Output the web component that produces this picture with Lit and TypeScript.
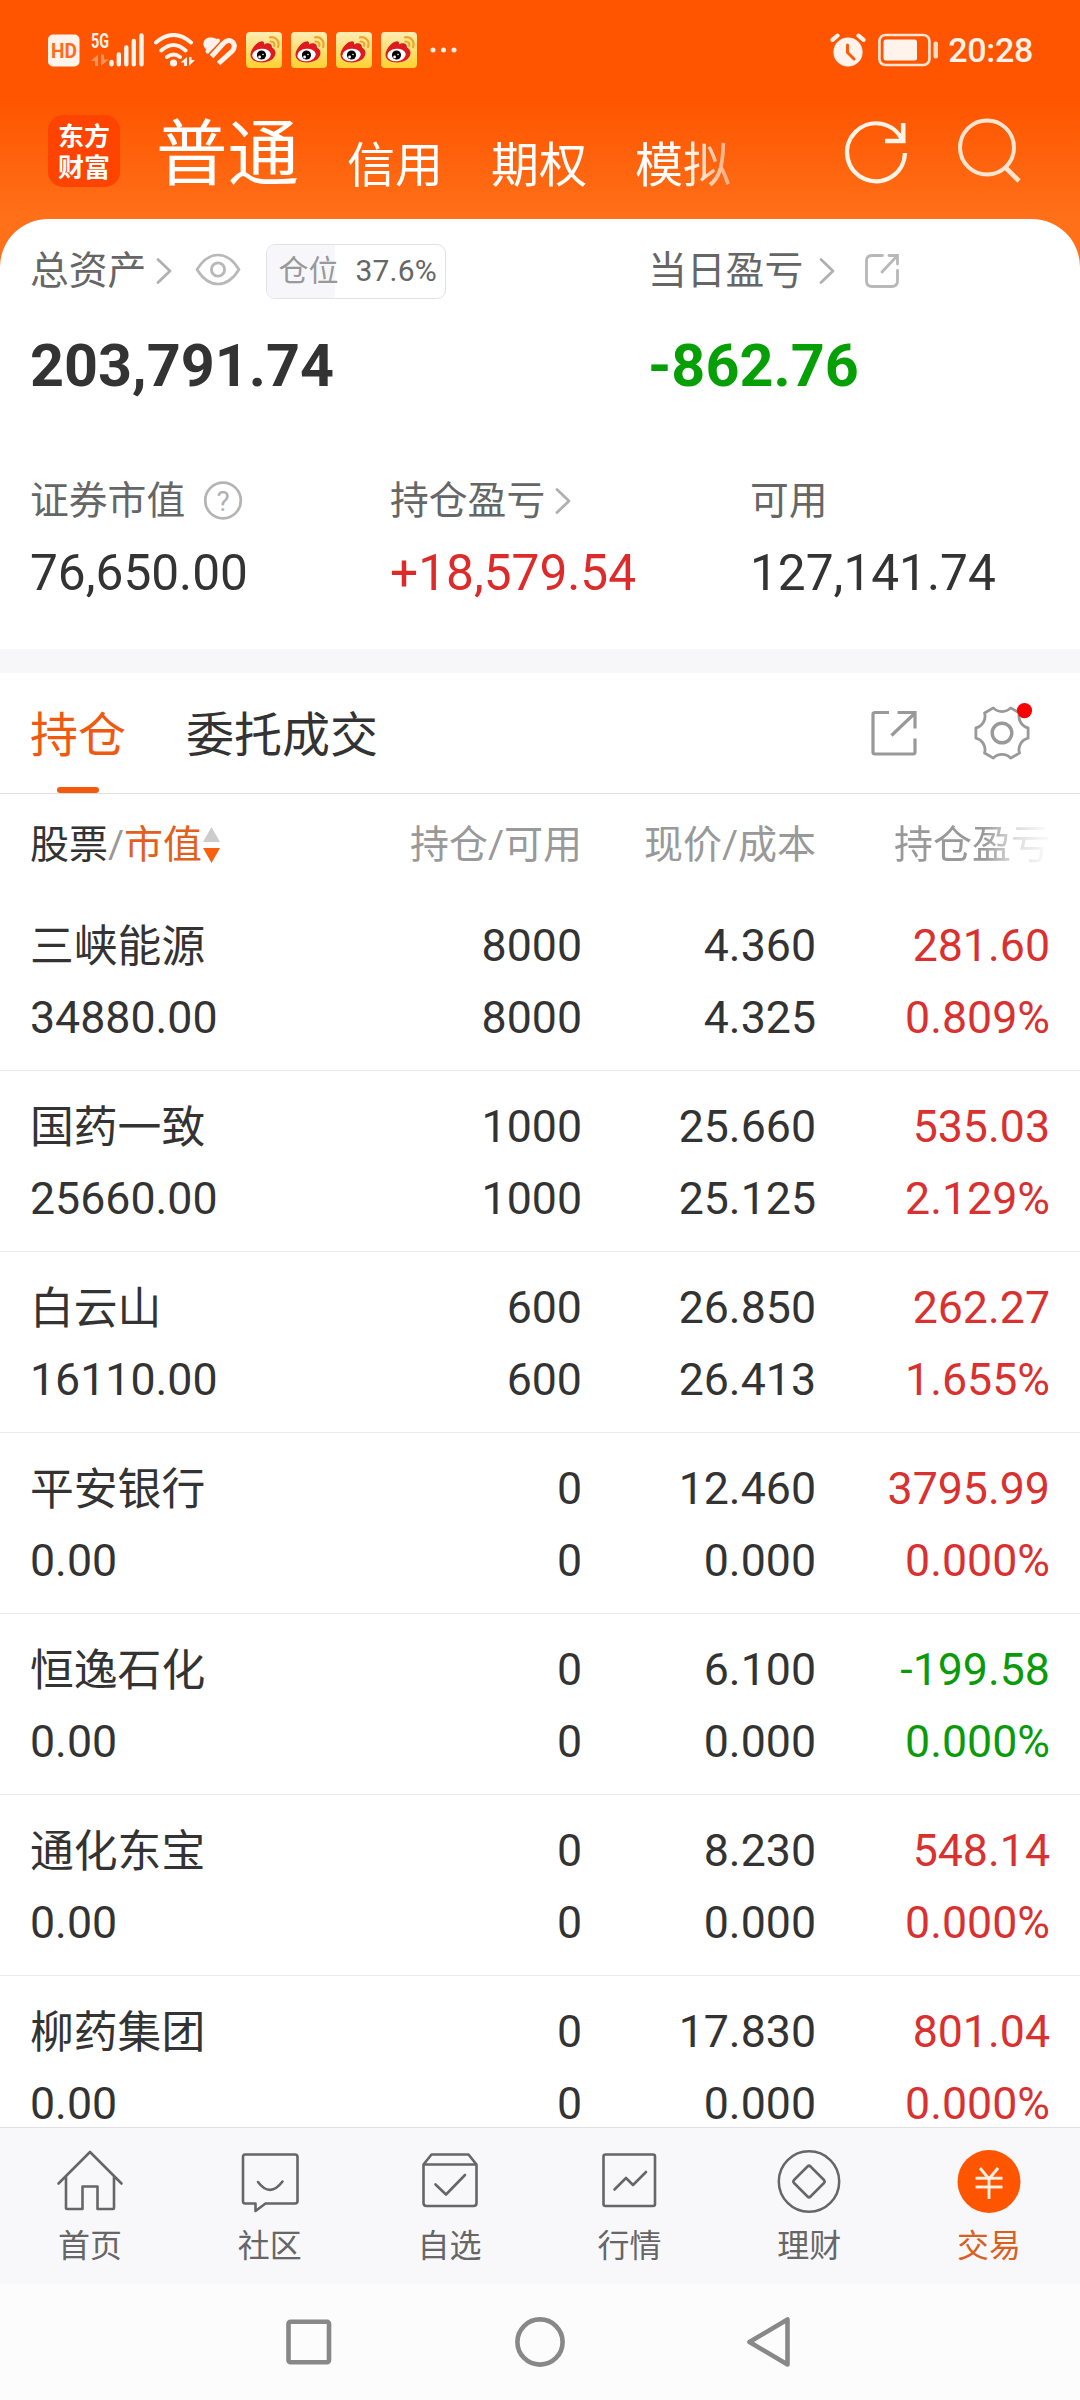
import { LitElement, html, css, svg } from "lit";
import { customElement, property } from "lit/decorators.js";
import { classMap } from "lit/directives/class-map.js";

type Tone = "up" | "down";
interface Holding {
  name: string;
  value: string;
  held: string;
  usable: string;
  price: string;
  cost: string;
  profit: string;
  rate: string;
  tone: Tone;
}

const HOLDINGS: Holding[] = [
  { name: "三峡能源", value: "34880.00", held: "8000", usable: "8000", price: "4.360", cost: "4.325", profit: "281.60", rate: "0.809%", tone: "up" },
  { name: "国药一致", value: "25660.00", held: "1000", usable: "1000", price: "25.660", cost: "25.125", profit: "535.03", rate: "2.129%", tone: "up" },
  { name: "白云山", value: "16110.00", held: "600", usable: "600", price: "26.850", cost: "26.413", profit: "262.27", rate: "1.655%", tone: "up" },
  { name: "平安银行", value: "0.00", held: "0", usable: "0", price: "12.460", cost: "0.000", profit: "3795.99", rate: "0.000%", tone: "up" },
  { name: "恒逸石化", value: "0.00", held: "0", usable: "0", price: "6.100", cost: "0.000", profit: "-199.58", rate: "0.000%", tone: "down" },
  { name: "通化东宝", value: "0.00", held: "0", usable: "0", price: "8.230", cost: "0.000", profit: "548.14", rate: "0.000%", tone: "up" },
  { name: "柳药集团", value: "0.00", held: "0", usable: "0", price: "17.830", cost: "0.000", profit: "801.04", rate: "0.000%", tone: "up" },
];

/* Six-toothed gear outline centred on the origin. */
function gearPath(): string {
  const radius = 26.6;
  const half = 11;
  const pt = (deg: number) => {
    const a = (deg * Math.PI) / 180;
    return `${(radius * Math.cos(a)).toFixed(2)} ${(radius * Math.sin(a)).toFixed(2)}`;
  };
  let d = `M${pt(-half)}`;
  for (let k = 0; k < 6; k++) {
    d += `L${pt(k * 60 + half)}A12 12 0 0 0 ${pt((k + 1) * 60 - half)}`;
  }
  return d + "Z";
}

const chevron = html`<svg class="chevron" width="24" height="34" viewBox="0 0 24 34">
  <path d="M5 5.500 17 17 5 28.500" fill="none" stroke="#b0b0b0" stroke-width="2.800" stroke-linecap="round" stroke-linejoin="round" />
</svg>`;

@customElement("status-bar")
export class StatusBar extends LitElement {
  static styles = css`
    :host { display: flex; justify-content: space-between; align-items: center; height: 100px; box-sizing: border-box; padding: 0 47px 0 48px; }
    .side { display: flex; align-items: center; }
    .signal { margin-left: 11px; overflow: visible; }
    .wifi { margin-left: 9px; }
    .health { margin-left: 7px; }
    .feed { margin-left: 9px; }
    .more { margin-left: 13px; }
    .battery { margin-left: 12px; }
    .time { margin-left: 10px; font: 500 34px/40px Roboto, sans-serif; color: #fff3e8; letter-spacing: -0.3px; }
    text { font-family: Roboto, sans-serif; font-weight: 700; }
  `;

  private feedIcon() {
    return html`<svg class="feed" width="36" height="36" viewBox="0 0 36 36">
      <defs><linearGradient id="g" x1="0" y1="0" x2="0" y2="1"><stop offset="0" stop-color="#ffedb4" /><stop offset="1" stop-color="#ffd130" /></linearGradient></defs>
      <rect width="36" height="36" rx="4" fill="url(#g)" />
      <path d="M4.500 22C5 17 11 9.500 16 9.300C18 9.300 18.300 11 18 12.500C21 10.500 26 10.500 26 15.500C28 16.500 29.500 18.500 29.500 21C29 27 23 30.500 16 30.500C9 30.500 4 27 4.500 22Z" fill="#dc1a20" />
      <ellipse cx="15.500" cy="23" rx="9.300" ry="6.200" fill="#fff" transform="rotate(-6 15.500 23)" />
      <circle cx="15.500" cy="23" r="4.600" fill="#080606" />
      <circle cx="13.600" cy="25" r="1.400" fill="#fff" /><circle cx="17" cy="22.500" r=".8" fill="#fff" />
      <path d="M24 5.300C30 4.500 34 9.500 32 15M24.500 9.500C27.500 9.300 29 11.500 28.300 14" fill="none" stroke="#efa52c" stroke-width="2.200" stroke-linecap="round" />
    </svg>`;
  }

  render() {
    return html`
      <div class="side">
        <svg width="32" height="34" viewBox="0 0 32 34">
          <rect y="1.500" width="31.500" height="32" rx="5" fill="#fff3ec" />
          <text x="3" y="25" font-size="21" textLength="26" lengthAdjust="spacingAndGlyphs" fill="#ff6a1c">HD</text>
        </svg>
        <svg class="signal" width="54" height="34" viewBox="0 0 54 34">
          <text x="0" y="15" font-size="20" textLength="18" lengthAdjust="spacingAndGlyphs" fill="#fff3ec">5G</text>
          <path d="M0 28 7 21.500V33H4V28ZM10 21.500H13V26.500H17.500L10 33Z" fill="#ff9460" />
          <path d="M20.500 29V31.200M27.800 21.500V31.200M35.300 14.500V31.200M42.800 8V31.200M50.500 2.500V31.200" stroke="#fff3ec" stroke-width="4.400" stroke-linecap="round" />
        </svg>
        <svg class="wifi" width="42" height="34" viewBox="0 0 42 34">
          <path d="M2 9.500Q19.500-5.500 37 9.500M7.300 17.500Q19.500 6.500 31.500 17.500M13 24Q19.500 19 26 24" fill="none" stroke="#fff3ec" stroke-width="4" stroke-linecap="round" />
          <circle cx="19.500" cy="30" r="3.600" fill="#fff3ec" />
          <path d="M26.500 29.500 33 24V33H30V29.500ZM35 24H37.500V27H41L35 33Z" fill="#fff3ec" />
        </svg>
        <svg class="health" width="34" height="34" viewBox="0 0 34 34">
          <path d="M3.500 17C-2.500 11 1 4.500 7.500 4.500C10 4.500 12 5 14 6.200Z" fill="#fff3ec" />
          <path d="M8.500 23.500 20.500 10.300Q26 5 30 9.500Q33 14 29 18.300L15.500 30.500" fill="none" stroke="#fff3ec" stroke-width="5" />
          <path d="M4.500 18.500 15 7.500" stroke="#fff3ec" stroke-width="4" stroke-linecap="round" />
        </svg>
        ${[0, 1, 2, 3].map(() => this.feedIcon())}
        <svg class="more" width="28" height="8" viewBox="0 0 28 8">
          <path d="M3 4H3.010M13.500 4H13.510M24 4H24.010" stroke="#fff0e4" stroke-width="5" stroke-linecap="round" />
        </svg>
      </div>
      <div class="side">
        <svg width="36" height="34" viewBox="0 0 36 34">
          <circle cx="18" cy="19" r="14.600" fill="#fff3ec" />
          <path d="M2.500 6.800 7.500 2.600M33.500 6.800 28.500 2.600" stroke="#fff3ec" stroke-width="4.200" stroke-linecap="round" />
          <path d="M17.500 12V19.500L24 26" fill="none" stroke="#ff5a08" stroke-width="3" stroke-linecap="round" />
        </svg>
        <svg class="battery" width="60" height="34" viewBox="0 0 60 34">
          <rect x="1.400" y="2" width="50" height="30" rx="6" fill="none" stroke="#ffe6d4" stroke-width="2.600" />
          <rect x="5.500" y="6.500" width="33.500" height="21" rx="2.500" fill="#fff3ec" />
          <rect x="55.500" y="8.500" width="4.500" height="17" rx="2" fill="#ffdcc4" />
        </svg>
        <span class="time">20:28</span>
      </div>
    `;
  }
}

@customElement("title-bar")
export class TitleBar extends LitElement {
  static styles = css`
    :host { display: flex; align-items: flex-end; height: 119px; box-sizing: border-box; padding: 0 48px 19px; }
    .logo { width: 72px; height: 72px; box-sizing: border-box; align-self: flex-start; margin-top: 15px; border-radius: 15px; background: #ff4300; color: #fff; text-align: center; padding-top: 4px; font: 700 26px/31px "Noto Sans CJK SC", sans-serif; }
    .modes { display: flex; align-items: flex-end; gap: 48px; width: 660px; margin-left: 36px; overflow: hidden; color: #fff; font-size: 48px; line-height: 69px; white-space: nowrap; -webkit-mask-image: linear-gradient(90deg, #000 528px, transparent 615px); mask-image: linear-gradient(90deg, #000 528px, transparent 615px); }
    .current { font-size: 71.5px; line-height: 90px; }
    .tools { display: flex; gap: 42px; margin-left: 24px; padding-bottom: 12px; }
    svg { display: block; }
  `;

  render() {
    return html`
      <div class="logo"><div>东方</div><div>财富</div></div>
      <nav class="modes">
        <span class="current">普通</span><span>信用</span><span>期权</span><span>模拟</span>
      </nav>
      <div class="tools">
        <svg width="72" height="72" viewBox="0 0 72 72">
          <path d="M65 37A29 29 0 1 1 62.500 24.500" fill="none" stroke="#fff4e8" stroke-width="4.300" />
          <path d="M63.200 7V25H45" fill="none" stroke="#fff4e8" stroke-width="4.600" />
        </svg>
        <svg width="72" height="72" viewBox="0 0 72 72">
          <circle cx="33" cy="31.500" r="27" fill="none" stroke="#ffe5cf" stroke-width="4" />
          <path d="M51.500 51.500 65 65" stroke="#ffe5cf" stroke-width="4.600" />
        </svg>
      </div>
    `;
  }
}

@customElement("asset-summary")
export class AssetSummary extends LitElement {
  static styles = css`
    :host { display: block; height: 430px; box-sizing: border-box; padding: 25px 0 0 30px; background: #fff; border-radius: 48px 48px 0 0; color: #666; font-size: 38.8px; line-height: 54px; white-space: nowrap; }
    .top { display: grid; grid-template-columns: 618px 1fr; }
    .bottom { display: grid; grid-template-columns: 360px 360px 1fr; margin-top: 78px; }
    .label { display: flex; align-items: center; height: 54px; }
    .bottom .label { height: 48px; line-height: 48px; }
    .chevron { margin-left: 7px; }
    .wide .chevron { margin-left: 13px; }
    .eye { margin-left: 16px; }
    .share { margin-left: 22px; }
    .help { margin-left: 18px; }
    .badge { display: flex; width: 180px; height: 55px; box-sizing: border-box; margin-left: 23px; border: 1px solid #e2e2e2; border-radius: 9px; overflow: hidden; font-size: 30px; line-height: 52px; }
    .badge-key { width: 68px; box-sizing: border-box; padding-left: 11px; background: #f7f7fb; color: #999; }
    .badge-value { padding-left: 20px; letter-spacing: 0.2px; }
    .total { margin-top: 33px; font-size: 59.3px; font-weight: 700; line-height: 69px; height: 68px; color: #333; }
    .amount { margin-top: 18px; font-size: 49.6px; line-height: 61px; color: #333; }
    .total.down { color: #06a006; }
    .amount.up { color: #dd2b2b; }
  `;

  render() {
    return html`
      <div class="top">
        <div>
          <div class="label">
            <span>总资产</span>${chevron}
            <svg class="eye" width="50" height="36" viewBox="0 0 50 36">
              <path d="M4 16.500Q13 2 25 2T46 16.500Q37 31 25 31T4 16.500Z" fill="none" stroke="#b8b8b8" stroke-width="2.700" stroke-linejoin="round" />
              <circle cx="25" cy="16.500" r="6.600" fill="none" stroke="#b8b8b8" stroke-width="2.900" />
            </svg>
            <div class="badge"><span class="badge-key">仓位</span><span class="badge-value">37.6%</span></div>
          </div>
          <div class="total">203,791.74</div>
        </div>
        <div>
          <div class="label wide">
            <span>当日盈亏</span>${chevron}
            <svg class="share" width="40" height="34" viewBox="0 0 40 34">
              <path d="M20.500 1.500H10Q4.500 1.500 4.500 7V27Q4.500 32.500 10 32.500H29.500Q35.500 32.500 35.500 27V16.500M27 1.500H35.500V10M20 18 35 2" fill="none" stroke="#b8b8b8" stroke-width="2.800" stroke-linecap="round" />
            </svg>
          </div>
          <div class="total down">-862.76</div>
        </div>
      </div>
      <div class="bottom">
        <div>
          <div class="label">
            <span>证券市值</span>
            <svg class="help" width="40" height="40" viewBox="0 0 40 40">
              <circle cx="20" cy="19.500" r="17.800" fill="none" stroke="#b4b4b4" stroke-width="2.700" />
              <text x="20" y="29.500" text-anchor="middle" font-size="28" fill="#b0b0b0">?</text>
            </svg>
          </div>
          <div class="amount">76,650.00</div>
        </div>
        <div>
          <div class="label"><span>持仓盈亏</span>${chevron}</div>
          <div class="amount up">+18,579.54</div>
        </div>
        <div>
          <div class="label"><span>可用</span></div>
          <div class="amount">127,141.74</div>
        </div>
      </div>
    `;
  }
}

@customElement("holding-row")
export class HoldingRow extends LitElement {
  @property({ attribute: false }) item!: Holding;

  static styles = css`
    :host { display: grid; grid-template-columns: 1fr 252px 234px 234px; height: 181px; box-sizing: border-box; padding: 20px 30px 0 30px; border-bottom: 1px solid #ebebeb; color: #333; font-size: 44.7px; line-height: 72px; white-space: nowrap; }
    .cell { text-align: right; }
    .first { text-align: left; }
    .name { font-size: 43.8px; height: 72px; line-height: 74px; }
    .up { color: #d93030; }
    .down { color: #0a9a0a; }
  `;

  render() {
    const h = this.item;
    return html`
      <div class="cell first"><div class="name">${h.name}</div><div>${h.value}</div></div>
      <div class="cell"><div>${h.held}</div><div>${h.usable}</div></div>
      <div class="cell"><div>${h.price}</div><div>${h.cost}</div></div>
      <div class=${classMap({ cell: true, [h.tone]: true })}><div>${h.profit}</div><div>${h.rate}</div></div>
    `;
  }
}

@customElement("holdings-panel")
export class HoldingsPanel extends LitElement {
  static styles = css`
    :host { display: flex; flex-direction: column; min-height: 0; background: #fff; white-space: nowrap; }
    .tabs { display: flex; height: 121px; flex: none; box-sizing: border-box; padding: 0 46px 0 30px; border-bottom: 1px solid #e0e0e0; font-size: 48px; color: #333; }
    .tab { display: flex; flex-direction: column; align-items: center; padding-top: 27px; line-height: 72px; margin-right: 60px; }
    .active { color: #f05a10; }
    .active::after { content: ""; width: 42px; height: 6px; margin-top: 15px; border-radius: 3px; background: #f45a0c; }
    .actions { display: flex; margin-left: auto; padding-top: 30px; gap: 53px; }
    .head { display: grid; grid-template-columns: 1fr 252px 234px 234px; flex: none; height: 96px; box-sizing: border-box; padding: 6px 30px 0; font-size: 39px; line-height: 90px; color: #999; text-align: right; }
    .sort { display: flex; align-items: center; color: #333; }
    .slash { color: #999; }
    .picked { color: #e0601c; }
    .arrows { margin-left: 1px; }
    .fading { -webkit-mask-image: linear-gradient(90deg, #000 168px, rgba(0, 0, 0, 0.35) 198px, rgba(0, 0, 0, 0.08) 228px); mask-image: linear-gradient(90deg, #000 168px, rgba(0, 0, 0, 0.35) 198px, rgba(0, 0, 0, 0.08) 228px); }
    .list { flex: 1; min-height: 0; overflow: hidden; }
  `;

  render() {
    return html`
      <div class="tabs">
        <div class="tab active">持仓</div>
        <div class="tab">委托成交</div>
        <div class="actions">
          <svg width="48" height="60" viewBox="0 0 48 60">
            <path d="M20 9.500H6Q4 9.500 4 11.500V49Q4 51 6 51H44Q46 51 46 49V35.500M28.500 9.500H46V25.500M22.500 32.500 45 11" fill="none" stroke="#999" stroke-width="3.200" />
          </svg>
          <svg width="64" height="60" viewBox="0 0 64 60">
            <g transform="translate(32 30)" fill="none" stroke="#999">
              <path d=${gearPath()} stroke-width="2.800" stroke-linejoin="round" />
              <circle r="9.800" stroke-width="3.400" />
            </g>
            <circle cx="54.500" cy="7.600" r="7.600" fill="#fa0000" />
          </svg>
        </div>
      </div>
      <div class="head">
        <div class="sort">
          <span>股票</span><span class="slash">/</span><span class="picked">市值</span>
          <svg class="arrows" width="17" height="36" viewBox="0 0 17 36">
            <path d="M8.500 0 17 15H0Z" fill="#ccc" /><path d="M8.500 36 17 21H0Z" fill="#f86010" />
          </svg>
        </div>
        <span>持仓/可用</span><span>现价/成本</span><span class="fading">持仓盈亏</span>
      </div>
      <div class="list">${HOLDINGS.map((h) => html`<holding-row .item=${h}></holding-row>`)}</div>
    `;
  }
}

const line = (d: string) => svg`<path d=${d} fill="none" stroke="#666" stroke-width="2.600" stroke-linejoin="round" stroke-linecap="round" />`;

/* Drawings share a 72 by 66 box whose centre column is x = 36. */
const TABS = [
  { label: "首页", art: line("M4.500 35.500 36 4 67.500 35.500M12 29V60.500Q12 61 13 61H28.500V38.500H43.500V61H59Q60 61 60 60V29") },
  { label: "社区", art: svg`${line("M11 6.500H61Q63.500 6.500 63.500 9V53Q63.500 55.500 61 55.500H31.500L21.500 63V55.500H11Q9 55.500 9 53V9Q9 6.500 11 6.500Z")}${line("M24 34Q36 50 48.500 33.500")}` },
  { label: "自选", art: svg`${line("M9.500 16.500 17.500 6.500H54.500L62.500 16.500V55Q62.500 58 59.500 58H12.500Q9.500 58 9.500 55ZM9.500 16.500H62.500")}${line("M21.500 36.500 32 46.500 51 27")}` },
  { label: "行情", art: svg`${line("M12.500 6.500H60Q62 6.500 62 8.500V56Q62 58 60 58H12.500Q10.500 58 10.500 56V8.500Q10.500 6.500 12.500 6.500Z")}${line("M21.500 41.500 33 30 40 37 53 24")}` },
  { label: "理财", art: svg`<circle cx="36" cy="33.500" r="30.200" fill="none" stroke="#666" stroke-width="2.500" />${line("M34.500 18.500Q36 17 37.500 18.500L51 32Q52.300 33.500 51 35L37.500 48.500Q36 50 34.500 48.500L21 35Q19.700 33.500 21 32Z")}` },
  { label: "交易", art: svg`<circle cx="36" cy="33.500" r="31.500" fill="#ff5500" /><g stroke="#fff0e2" stroke-width="2.900"><line x1="27" y1="20" x2="36" y2="31" /><line x1="45" y1="20" x2="36" y2="31" /><line x1="22.500" y1="30.200" x2="49.500" y2="30.200" /><line x1="22.500" y1="39" x2="49.500" y2="39" /><line x1="36" y1="30" x2="36" y2="51" /></g>` },
];

@customElement("bottom-tabs")
export class BottomTabs extends LitElement {
  static styles = css`
    :host { display: grid; grid-template-columns: repeat(6, 1fr); height: 157px; box-sizing: border-box; border-top: 1px solid #e0e0e2; background: #f8f8fb; color: #666; font-size: 32px; line-height: 44px; padding-right: 1px; }
    .tab { display: flex; flex-direction: column; align-items: center; padding-top: 20px; }
    .tab svg { display: block; margin-bottom: 10px; }
    .tab:last-child { color: #d9601f; }
  `;

  render() {
    return TABS.map((t) => html`<div class="tab"><svg width="72" height="66" viewBox="0 0 72 66">${t.art}</svg><span>${t.label}</span></div>`);
  }
}

@customElement("system-nav")
export class SystemNav extends LitElement {
  static styles = css`
    :host { display: flex; justify-content: center; align-items: center; gap: 174px; height: 116px; background: #fcfcfc; }
    svg { fill: none; stroke: #888; stroke-width: 4.6px; stroke-linejoin: round; }
  `;

  render() {
    return html`
      <svg width="56" height="56" viewBox="0 0 56 56"><rect x="6.500" y="7.800" width="40.500" height="40.500" rx="2" /></svg>
      <svg width="56" height="56" viewBox="0 0 56 56"><circle cx="28" cy="28" r="22.600" /></svg>
      <svg width="56" height="56" viewBox="0 0 56 56"><path d="M7.500 28 45.500 5.500V50.500Z" /></svg>
    `;
  }
}

@customElement("app-root")
export class AppRoot extends LitElement {
  static styles = css`
    :host { display: block; width: 1080px; height: 2400px; overflow: hidden; font-family: Roboto, "Noto Sans CJK SC", sans-serif; }
    .screen { display: flex; flex-direction: column; height: 100%; background: linear-gradient(180deg, #ff5500 0, #ff5500 100px, #ff7019 219px, #ff7019 300px, #f7f7fa 300px); }
    asset-summary { flex: none; margin-bottom: 24px; }
    holdings-panel { flex: 1; }
  `;

  render() {
    return html`
      <div class="screen">
        <status-bar></status-bar>
        <title-bar></title-bar>
        <asset-summary></asset-summary>
        <holdings-panel></holdings-panel>
        <bottom-tabs></bottom-tabs>
        <system-nav></system-nav>
      </div>
    `;
  }
}
